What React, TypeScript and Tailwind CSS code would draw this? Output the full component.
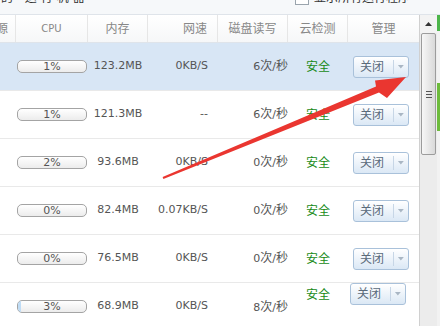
const rows = [
  { cpu: 1, mem: "123.2MB", net: "0KB/S", disk: "6", selected: true },
  { cpu: 1, mem: "121.3MB", net: "--", disk: "6" },
  { cpu: 2, mem: "93.6MB", net: "0KB/S", disk: "0" },
  { cpu: 0, mem: "82.4MB", net: "0.07KB/S", disk: "0" },
  { cpu: 0, mem: "76.5MB", net: "0KB/S", disk: "0" },
  { cpu: 3, mem: "68.9MB", net: "0KB/S", disk: "8", glitch: true },
];

const font = { fontFamily: '"DejaVu Sans", "Noto Sans CJK SC", sans-serif' };

const CloseButton = () => (
  <div className="flex h-[22px] w-[56px] items-center rounded-[3px] border border-[#a9c1da] bg-gradient-to-b from-white to-[#dbe8f5] shadow-[inset_0_1px_0_#fff]">
    <span className="w-[40px] pl-[6px] text-[12px] leading-none text-[#5a6a7a]">关闭</span>
    <span className="h-[14px] w-px bg-[#c7d6e6]" />
    <svg width="14" height="8" viewBox="0 0 14 8">
      <path d="M4 2 L10 2 L7 5.5 Z" fill="#a9b6c4" />
    </svg>
  </div>
);

const CpuBar = ({ value }: { value: number }) => (
  <div className="relative h-[13px] w-[70px] overflow-hidden rounded-[5px] border border-[#a4a4a4] bg-gradient-to-b from-white to-[#ececec]">
    {value > 2 && <div className="absolute left-0 top-0 h-full w-[3px] bg-[#bfdcf5]" />}
    <div className="relative text-center text-[11px] leading-[11px] text-[#555]">{value}%</div>
  </div>
);

export default function App() {
  return (
    <div className="relative h-[326px] w-[440px] overflow-hidden bg-white" style={font}>
      {/* cut-off toolbar strip */}
      <div className="flex h-[15px] items-start overflow-hidden border-b border-[#dfe4ea] bg-[#f6f8fa]">
        <span className="mt-[-9px] pl-[1px] text-[12px] leading-[14px] tracking-[4px] text-[#333]">的 运行机器</span>
        <div className="flex-1" />
        <span className="mt-[-9px] mr-[5px] h-[14px] w-[14px] border border-[#9aa4ad] bg-white" />
        <span className="mt-[-9px] mr-[30px] text-[12px] leading-[14px] text-[#333]">显示所有运行程序</span>
      </div>

      <div className="flex">
        {/* table */}
        <div className="w-[419px]">
          <div className="flex h-[28px] items-center border-b border-[#dfe4ea] bg-gradient-to-b from-white to-[#f6f7f8] text-[12px] text-[#888]">
            <div className="flex h-full w-[16px] items-center overflow-hidden border-r border-[#e6e6e6]">
              <span className="ml-[-4px]">源</span>
            </div>
            <div className="flex h-full w-[72px] items-center justify-center border-r border-[#e6e6e6] text-[10px]">CPU</div>
            <div className="flex h-full w-[60px] items-center justify-center border-r border-[#e6e6e6]">内存</div>
            <div className="flex h-full w-[70px] items-center justify-end border-r border-[#e6e6e6] pr-[10px]">网速</div>
            <div className="flex h-full w-[70px] items-center justify-center border-r border-[#e6e6e6]">磁盘读写</div>
            <div className="flex h-full w-[60px] items-center justify-center border-r border-[#e6e6e6]">云检测</div>
            <div className="flex h-full w-[71px] items-center justify-center">管理</div>
          </div>

          {rows.map((r, i) => (
            <div
              key={i}
              className={`flex h-[48px] items-center border-b border-[#e9e9e9] text-[11px] text-[#555] ${r.selected ? "bg-[#d8e6f5]" : "bg-white"}`}
            >
              <div className="w-[16px]" />
              <div className="w-[72px] pl-[1px]">
                <CpuBar value={r.cpu} />
              </div>
              <div className="w-[60px] text-center">{r.mem}</div>
              <div className="w-[70px] pr-[10px] text-right">{r.net}</div>
              <div className={`w-[70px] text-right ${r.glitch ? "mt-[2px]" : ""}`}>
                {r.disk}
                <span className="text-[12px]">次</span>/<span className="text-[12px]">秒</span>
              </div>
              <div className={`w-[60px] text-center text-[12px] text-[#178a17] ${r.glitch ? "mt-[3px] self-start" : ""}`}>安全</div>
              <div className={`w-[71px] ${r.glitch ? "self-start pl-[2px]" : "pl-[5px]"}`}>
                <CloseButton />
              </div>
            </div>
          ))}
        </div>

        {/* scrollbar */}
        <div className="flex w-[18px] flex-col border-l border-[#d0d0d0] bg-[#ececec]">
          <div className="flex h-[18px] items-center justify-center bg-[#f3f3f3]">
            <svg width="7" height="4" viewBox="0 0 7 4">
              <path d="M0 4 L3.5 0 L7 4 Z" fill="#333" />
            </svg>
          </div>
          <div className="mx-[1px] flex h-[122px] items-center justify-center rounded-[2px] border border-[#9c9c9c] bg-gradient-to-r from-[#f7f7f7] to-[#d9d9d9]">
            <div className="flex flex-col gap-[2px]">
              <span className="h-px w-[6px] bg-[#555]" />
              <span className="h-px w-[6px] bg-[#555]" />
              <span className="h-px w-[6px] bg-[#555]" />
            </div>
          </div>
        </div>

        {/* right window edge */}
        <div className="flex w-[3px] flex-col bg-[#f2f2f2]">
          <div className="h-[16px] bg-[#4cb54a]" />
          <div className="h-[52px]" />
          <div className="h-[48px] bg-[#6dbb3c]" />
        </div>
      </div>

      {/* red annotation arrow */}
      <svg className="pointer-events-none absolute left-0 top-0" width="440" height="326" viewBox="0 0 440 326">
        <polygon
          points="162.6,177 163.4,179 379,92.5 387,98 406,77 375,80.5 376,86.5"
          fill="#ea3630"
        />
      </svg>
    </div>
  );
}
